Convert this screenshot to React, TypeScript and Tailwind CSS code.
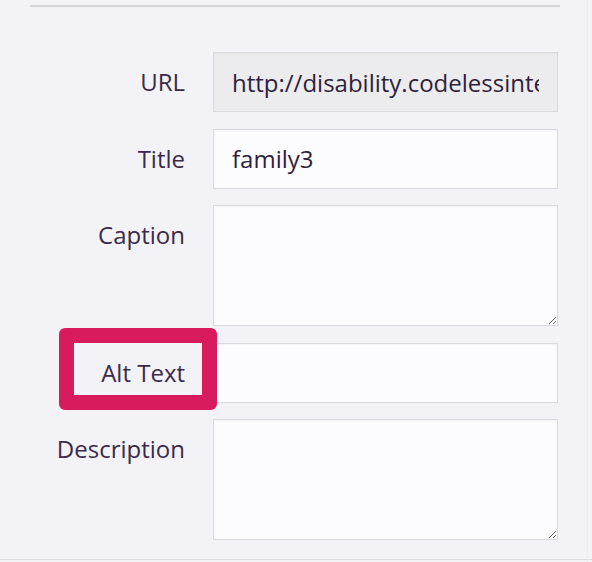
import type { ReactNode } from "react";

const font = { fontFamily: '"Open Sans", "Noto Sans", sans-serif' };

function Row({ label, children, hl }: { label: string; children: ReactNode; hl?: boolean }) {
  return (
    <div className="relative flex gap-[28px]">
      {hl && (
        <div className="absolute left-[59px] top-[-15px] w-[158px] h-[82px] border-[15px] border-[#d81b5c] rounded-[6px]" />
      )}
      <div className="w-[185px] h-[60px] flex items-center justify-end text-[24px] text-[#3b2a4a] shrink-0">
        {label}
      </div>
      {children}
    </div>
  );
}

const inputCls =
  "w-[345px] h-[60px] px-[18px] border border-[#d9d9df] text-[24px] text-[#2f1f3a] outline-none shadow-[inset_0_1px_2px_rgba(0,0,0,0.04)]";
const areaCls =
  "w-[345px] h-[121px] px-[18px] py-[14px] border border-[#d9d9df] bg-[#fcfcfe] text-[24px] text-[#2f1f3a] outline-none resize-y shadow-[inset_0_1px_2px_rgba(0,0,0,0.04)]";

export default function App() {
  return (
    <main className="relative w-[592px] h-[562px] bg-[#f3f3f7] overflow-hidden" style={font}>
      <div className="pt-[5px] pl-[30px] pr-[32px]">
        <div className="h-[2px] bg-[#d4d4da]" />
      </div>
      <div className="mt-[45px] flex flex-col gap-[16.5px]">
        <Row label="URL">
          <input
            className={inputCls + " bg-[#ececef]"}
            readOnly
            value="http://disability.codelessinteractive.com/wp-content/uploads/family3.jpg"
          />
        </Row>
        <Row label="Title">
          <input className={inputCls + " bg-[#fcfcfe]"} defaultValue="family3" />
        </Row>
        <Row label="Caption">
          <textarea className={areaCls} />
        </Row>
        <Row label="Alt Text" hl>
          <input className={inputCls + " bg-[#fcfcfe]"} />
        </Row>
        <Row label="Description">
          <textarea className={areaCls} />
        </Row>
      </div>
      <div className="absolute left-0 right-0 bottom-[2px] h-px bg-[#dcdce2]" />
      <div className="absolute top-0 bottom-0 right-[4px] w-px bg-[#ebebf0]" />
    </main>
  );
}
